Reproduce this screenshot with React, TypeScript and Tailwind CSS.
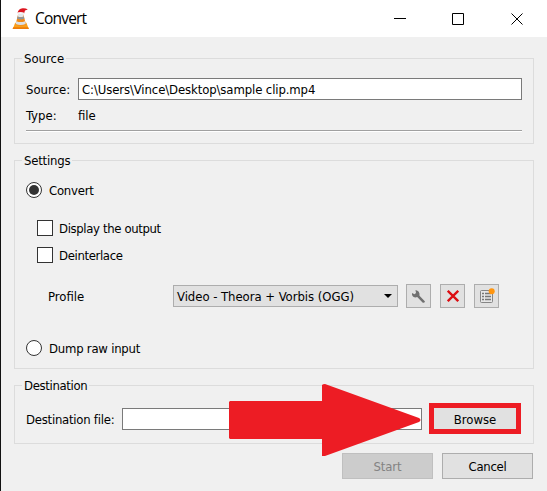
import React from 'react'

const Group = ({ title, className, children }: { title: React.ReactNode, className: string, children: React.ReactNode }) => {
    return (
        <div className={`relative border border-[#dcdcdc] ${className}`}>
            <span className="absolute -top-[9px] left-[7px] bg-[#f0f0f0] px-[2px] leading-[18px] whitespace-nowrap">{title}</span>
            {children}
        </div>
    )
}

const Radio = ({ label, checked }: { label: string, checked?: boolean }) => {
    return (
        <div className="flex items-center h-4 gap-[7px]">
            <svg width="16" height="16" viewBox="0 0 16 16">
                <circle cx="8" cy="8" r="7.5" fill="#fff" stroke="#333" />
                {checked && <circle cx="8" cy="8" r="5" fill="#333" />}
            </svg>
            <span className="relative top-px tracking-[-0.23px]">{label}</span>
        </div>
    )
}

const Checkbox = ({ label }: { label: string }) => {
    return (
        <div className="flex items-center h-4 gap-[6px]">
            <div className="size-4 bg-white border border-[#333]" />
            <span className="relative top-px tracking-[-0.36px]">{label}</span>
        </div>
    )
}

const ToolButton = ({ children }: { children: React.ReactNode }) => {
    return (
        <button className="flex items-center justify-center w-[25px] h-6 bg-[#e1e1e1] border border-[#adadad]">{children}</button>
    )
}

const Cone = () => {
    return (
        <svg width="18" height="22" viewBox="0 0 18 22">
            <path d="M3.2 14.8h11.2L16.8 21H.8z" fill="#f9a01b" />
            <path d="M1.2 19.2h15l.6 1.8H.6z" fill="#ee7c08" />
            <path d="M6 6.5h5.4l2.6 10q-5.2 2.4-10.4 0z" fill="#f28a16" />
            <path d="M6.1 6h5l.6 2.6q-3 1.3-6.2 0z" fill="#e4e7ea" />
            <path d="M5.6 8.6q3.2 1.3 6.2 0l.5 2.2q-3.6 1.6-7.3 0z" fill="#8f959b" />
            <path d="M4.4 13.2q4.3 1.8 8.6 0l.7 2.7q-5 2-10 0z" fill="#dbe0e5" />
            <path d="M5.5 4.9Q6.2.9 10.6.2q3-.3 5.2 1.2L13 2.6l-.9 3Q8.7 3.6 5.5 4.9z" fill="#dc1620" />
            <path d="M5.4 5.3q3.4-1.3 6.9.4" stroke="#f1eeee" strokeWidth="1.6" fill="none" />
        </svg>
    )
}

const App = () => {
    return (
        <div className="relative w-[547px] h-[491px] overflow-hidden bg-[#f0f0f0] border-l border-[#111] text-black text-[13px] leading-4 whitespace-nowrap [font-family:'DejaVu_Sans_Condensed','DejaVu_Sans',sans-serif] [font-stretch:condensed]">
            <div className="flex items-center h-[37px] bg-white pl-[11px]">
                <Cone />
                <span className="relative -top-px ml-[5px] text-[15.5px] tracking-[-0.8px] [font-family:'Open_Sans',sans-serif] [font-stretch:normal]">Convert</span>
                <svg className="ml-auto mr-[23px]" width="130" height="12" viewBox="0 0 130 12" fill="none" stroke="#000">
                    <path d="M0 5.5h12M58.5.5h11v11h-11zM117.5.5l11 11M128.5.5l-11 11" />
                </svg>
            </div>

            <div className="flex flex-col gap-4 pl-[13px] pt-[21px] w-[533px]">
                <Group title="Source" className="h-[86px] pl-[11px] pr-[11px] pt-[19px]">
                    <div className="flex items-center h-[22px]">
                        <span className="w-[52px] relative top-px">Source:</span>
                        <div className="flex-1 h-[22px] bg-white border border-[#7a7a7a] pl-[3px] leading-[21px] tracking-[-0.11px]">C:\Users\Vince\Desktop\sample clip.mp4</div>
                    </div>
                    <div className="flex mt-2 h-[22px]">
                        <span className="w-[52px]">Type:</span>
                        <span>file</span>
                    </div>
                    <div className="h-[2px] bg-white border-t border-[#a0a0a0]" />
                </Group>

                <Group title={<span className="tracking-[-0.2px]">Settings</span>} className="h-[209px] pl-[11px] pt-[21px]">
                    <Radio label="Convert" checked />
                    <div className="flex flex-col gap-[11px] pl-[11px] mt-[22px]">
                        <Checkbox label="Display the output" />
                        <Checkbox label="Deinterlace" />
                    </div>
                    <div className="flex items-center h-6 mt-[21px] pl-[22px]">
                        <span className="relative top-px w-[125px]">Profile</span>
                        <div className="flex items-center justify-between w-[225px] h-[22px] bg-[#e1e1e1] border border-[#adadad] pl-[3px] pr-[5px]">
                            <span className="relative top-px tracking-[-0.05px]">Video - Theora + Vorbis (OGG)</span>
                            <svg width="8" height="4" viewBox="0 0 8 4"><path d="M0 0h8L4 4z" /></svg>
                        </div>
                        <div className="flex gap-[9px] ml-2">
                            <ToolButton>
                                <svg width="15" height="15" viewBox="0 0 15 15">
                                    <path d="M4.5 1 5 4 3.5 5.2 1 4Q.5 8 4.3 8.4l1.9-.3 5.6 5.6q1.6.6 2.2-1.3L8.5 6.8Q9 1.8 4.5 1z" fill="#707070" />
                                </svg>
                            </ToolButton>
                            <ToolButton>
                                <svg width="12" height="12" viewBox="0 0 12 12" stroke="#dc0d12" strokeWidth="2.3"><path d="M.8.8l10.4 10.4M11.2.8.8 11.2" /></svg>
                            </ToolButton>
                            <ToolButton>
                                <svg width="16" height="16" viewBox="0 0 16 16" fill="none">
                                    <rect x="1.5" y="2.5" width="12" height="12" rx="1" fill="#e6e6e6" stroke="#858585" />
                                    <path d="M3 5.5h2M3 8.5h2M3 11.5h2M6 5.5h6M6 8.5h6M6 11.5h6" stroke="#777" strokeWidth="1.3" />
                                    <circle cx="12.7" cy="3.3" r="3" fill="#ff950e" />
                                </svg>
                            </ToolButton>
                        </div>
                    </div>
                    <div className="mt-8">
                        <Radio label="Dump raw input" />
                    </div>
                </Group>

                <Group title={<span className="tracking-[-0.35px]">Destination</span>} className="h-[59px] pl-[11px] pt-[17px]">
                    <div className="flex items-start">
                        <span className="w-[96px] mt-[9px] tracking-[-0.25px]">Destination file:</span>
                        <div className="w-[300px] h-[22px] mt-[5px] bg-white border border-[#7a7a7a]" />
                        <button className="ml-[7px] w-[92px] h-[31px] bg-[#e1e1e1] border-[5px] border-[#ed1c24] leading-[22px]"><span className="relative top-px">Browse</span></button>
                    </div>
                </Group>
            </div>

            <div className="flex gap-[9px] mt-[9px] ml-[341px]">
                <button className="w-[91px] h-[26px] bg-[#cccccc] border border-[#bfbfbf] text-[#838383] tracking-[-0.15px]"><span className="relative top-px">Start</span></button>
                <button className="w-[91px] h-[26px] bg-[#e1e1e1] border border-[#adadad] tracking-[-0.3px]"><span className="relative top-px">Cancel</span></button>
            </div>

            {/* pointer over the destination field */}
            <svg className="absolute left-[228px] top-[384px]" width="192" height="72" viewBox="0 0 192 72" fill="#ed1c24">
                <path d="M1 17h92V1q1-1 3-1l94 34q3 2 0 4L96 72h-3V55H1L0 54V18z" />
            </svg>
        </div>
    )
}

export default App
